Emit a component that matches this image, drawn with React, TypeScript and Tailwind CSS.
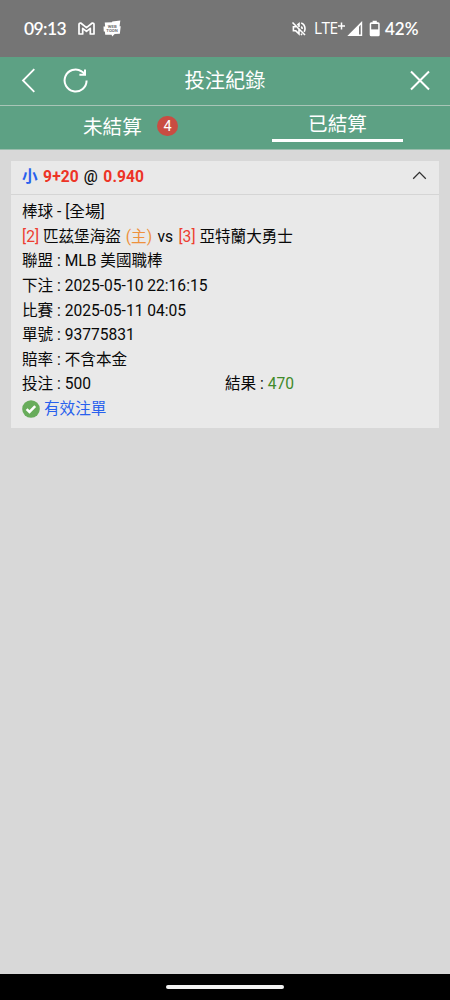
import React from "react";

const uiFont = "font-['Roboto','Noto_Sans_CJK_TC',sans-serif]";

function StatusBar() {
  return (
    <div className="flex h-[56.5px] shrink-0 items-start bg-[#757575] font-['Lato',sans-serif] text-white">
      <div className="ml-[24px] mt-[18px] w-[54px] whitespace-nowrap text-[17.5px] font-semibold leading-[21px] tracking-[-0.6px]">09:13</div>
      <svg className="mt-[22px] h-[14px] w-[17px]" viewBox="0 0 17 14" fill="none" stroke="#fff" strokeWidth="1.7" strokeLinejoin="round">
        <path d="M1 2.6Q1 .8 2.7 1L8.5 5.6 14.3 1Q16 .8 16 2.6V12H12.3V6.3L8.5 9.3 4.7 6.3V12H1Z" />
      </svg>
      <svg className="ml-[7.5px] mt-[20px] h-[17px] w-[18.5px]" viewBox="0 0 19 17">
        <path d="M1.8 2.4L9.2 2 9.5 1.2 17.8.3 17 6.3H18.2L17.3 13.8 12 14.2 9.5 16.6 8.8 14.8 2.3 15 1.9 11.5H.8L.5 6.4H2.2Z" fill="#fff" />
        <text x="9.5" y="7.6" textAnchor="middle" fontFamily="Roboto" fontSize="4.4" fontWeight="700" fill="#757575">WEB</text>
        <text x="9.3" y="11.9" textAnchor="middle" fontFamily="Roboto" fontSize="4.4" fontWeight="700" fill="#757575">TOON</text>
      </svg>
      <div className="flex-1" />
      <svg className="mt-[21px] h-[16px] w-[16px]" viewBox="0 0 16 16" fill="none" stroke="#fff" strokeWidth="1.6">
        <path d="M1.5 1.5L14 14M5 5.7H2.4V9.8H4.8L8 12.8V8.5M6.3 4.2L8 2.8V6M10.2 5.6Q11.3 6.5 11.2 8M10.2 2Q14.1 3.4 14 8Q13.9 9.5 13.2 10.8M9.8 13.7L11.2 13" />
      </svg>
      <div className="ml-[7px] mt-[17px] w-[23px] whitespace-nowrap font-['Open_Sans',sans-serif] text-[15.5px] leading-[22px] tracking-[-0.6px]">LTE</div>
      <svg className="mt-[21px] h-[10px] w-[9px]" viewBox="0 0 9 10" stroke="#fff" strokeWidth="1.5">
        <path d="M1 5H8M4.5 1.5V8.5" />
      </svg>
      <svg className="ml-[1px] mt-[20px] h-[17px] w-[16px]" viewBox="0 0 16 17">
        <path d="M15.2 1V16H.3Z" fill="#fff" />
        <path d="M12 6.5L13.7 4.8V14.5H12Z" fill="#757575" />
      </svg>
      <svg className="ml-[6px] mt-[20px] h-[17px] w-[12px]" viewBox="0 0 12 17">
        <path d="M3.6.8H7.8V2.3H9.2Q10.7 2.3 10.7 3.8V14.7Q10.7 16.2 9.2 16.2H2.2Q.7 16.2.7 14.7V3.8Q.7 2.3 2.2 2.3H3.6Z" fill="#fff" />
        <path d="M2.2 4H9.2V9.4H2.2Z" fill="#757575" />
      </svg>
      <div className="ml-[4px] mt-[18px] w-[65px] whitespace-nowrap text-[17px] font-semibold leading-[21px]">42%</div>
    </div>
  );
}

function Row({ children }: { children: React.ReactNode }) {
  return <div className="h-[24.6px] whitespace-nowrap leading-[24.6px]">{children}</div>;
}

export default function App() {
  return (
    <div className={`flex h-[1000px] w-[450px] flex-col overflow-hidden bg-[#d8d8d8] text-[#080808] ${uiFont}`}>
      <StatusBar />
      <header className="flex h-[49.5px] shrink-0 items-center border-b border-[#a8c5b7] bg-[#5da184] text-white">
        <svg className="ml-[21px] h-[26px] w-[15px]" viewBox="0 0 15 26" fill="none" stroke="#fff" strokeWidth="1.8">
          <path d="M13.3 1.2L2 12.5 13.3 23.8" />
        </svg>
        <svg className="ml-[27px] h-[26px] w-[26px]" viewBox="0 0 26 26" fill="none" stroke="#fff" strokeWidth="2">
          <path d="M23.6 12.4A11 11 0 1 1 18.6 3.3Q20.2 4.2 21.8 6.2M22 1.4V6.8H16.4" />
        </svg>
        <h1 className="ml-[95.5px] w-[82px] whitespace-nowrap text-[20.3px] font-normal leading-[30px]">投注紀錄</h1>
        <svg className="ml-[142px] h-[22px] w-[22px]" viewBox="0 0 22 22" stroke="#fff" strokeWidth="2">
          <path d="M2 1.5L20 19.5M20 1.5L2 19.5" />
        </svg>
      </header>
      <nav className="flex h-[44px] shrink-0 border-b border-[#9bbdad] bg-[#5da184] text-[19.6px] text-white">
        <div className="flex w-[225px] items-start pl-[83px] pt-[6px]">
          <span className="mt-px w-[59px] whitespace-nowrap leading-[30px]">未結算</span>
          <span className="ml-[15px] mt-[4px] flex h-[20px] w-[21px] items-center justify-center rounded-full bg-[#c94c42] pt-px text-[14.5px] leading-[20px]">4</span>
        </div>
        <div className="flex w-[225px] justify-center">
          <div className="h-[36px] w-[131px] border-b-[3px] border-white pt-[4px] text-center leading-[30px]">已結算</div>
        </div>
      </nav>
      <main className="flex-1 px-[11px] pt-[10.5px]">
        <section className="h-[267.5px] bg-[#e9e9e9] text-[15.6px]">
          <div className="flex h-[34px] items-center border-b border-[#d5d5d5] pl-[11px] pr-[12px] pt-[2px] font-bold text-[#ed3426]">
            <span className="text-[#2861ed]">小</span>
            <span className="ml-[5.5px] tracking-[0.1px]">9+20</span>
            <span className="ml-[5px] font-medium text-[#111]">@</span>
            <span className="ml-[5.5px] tracking-[0.1px]">0.940</span>
            <svg className="-mt-[5px] ml-auto h-[9px] w-[15px]" viewBox="0 0 15 9" fill="none" stroke="#303030" strokeWidth="1.3">
              <path d="M1.2 7.7L7.5 1.4 13.8 7.7" />
            </svg>
          </div>
          <div className="pl-[11px] pt-[5.8px]">
            <Row>棒球 - [全場]</Row>
            <Row><span className="text-[#ed3d30]">[2]</span> 匹茲堡海盜 <span className="ml-[1px] mr-[1.5px] text-[#ee913c]">(主)</span> vs <span className="ml-[1.5px] text-[#ed3d30]">[3]</span> 亞特蘭大勇士</Row>
            <Row>聯盟 : MLB 美國職棒</Row>
            <Row>下注 : 2025-05-10 22:16:15</Row>
            <Row>比賽 : 2025-05-11 04:05</Row>
            <Row>單號 : 93775831</Row>
            <Row>賠率 : 不含本金</Row>
            <Row>
              <div className="flex">
                <span className="w-[203px]">投注 : 500</span>
                <span>結果 : <span className="text-[#3f8a2a]">470</span></span>
              </div>
            </Row>
            <Row>
              <div className="flex items-center text-[#2861ed]">
                <svg className="mr-[4px] h-[18px] w-[18px]" viewBox="0 0 18 18" fill="none">
                  <circle cx="9" cy="9" r="8.8" fill="#68ac5b" />
                  <path d="M4.6 9.1L7.5 12 13.2 6.2" stroke="#fff" strokeWidth="2.5" />
                </svg>
                <span>有效注單</span>
              </div>
            </Row>
          </div>
        </section>
      </main>
      <footer className="flex h-[26.5px] shrink-0 justify-center bg-black pt-[11px]">
        <div className="h-[4px] w-[118px] rounded-full bg-[#f2f2f2]" />
      </footer>
    </div>
  );
}
